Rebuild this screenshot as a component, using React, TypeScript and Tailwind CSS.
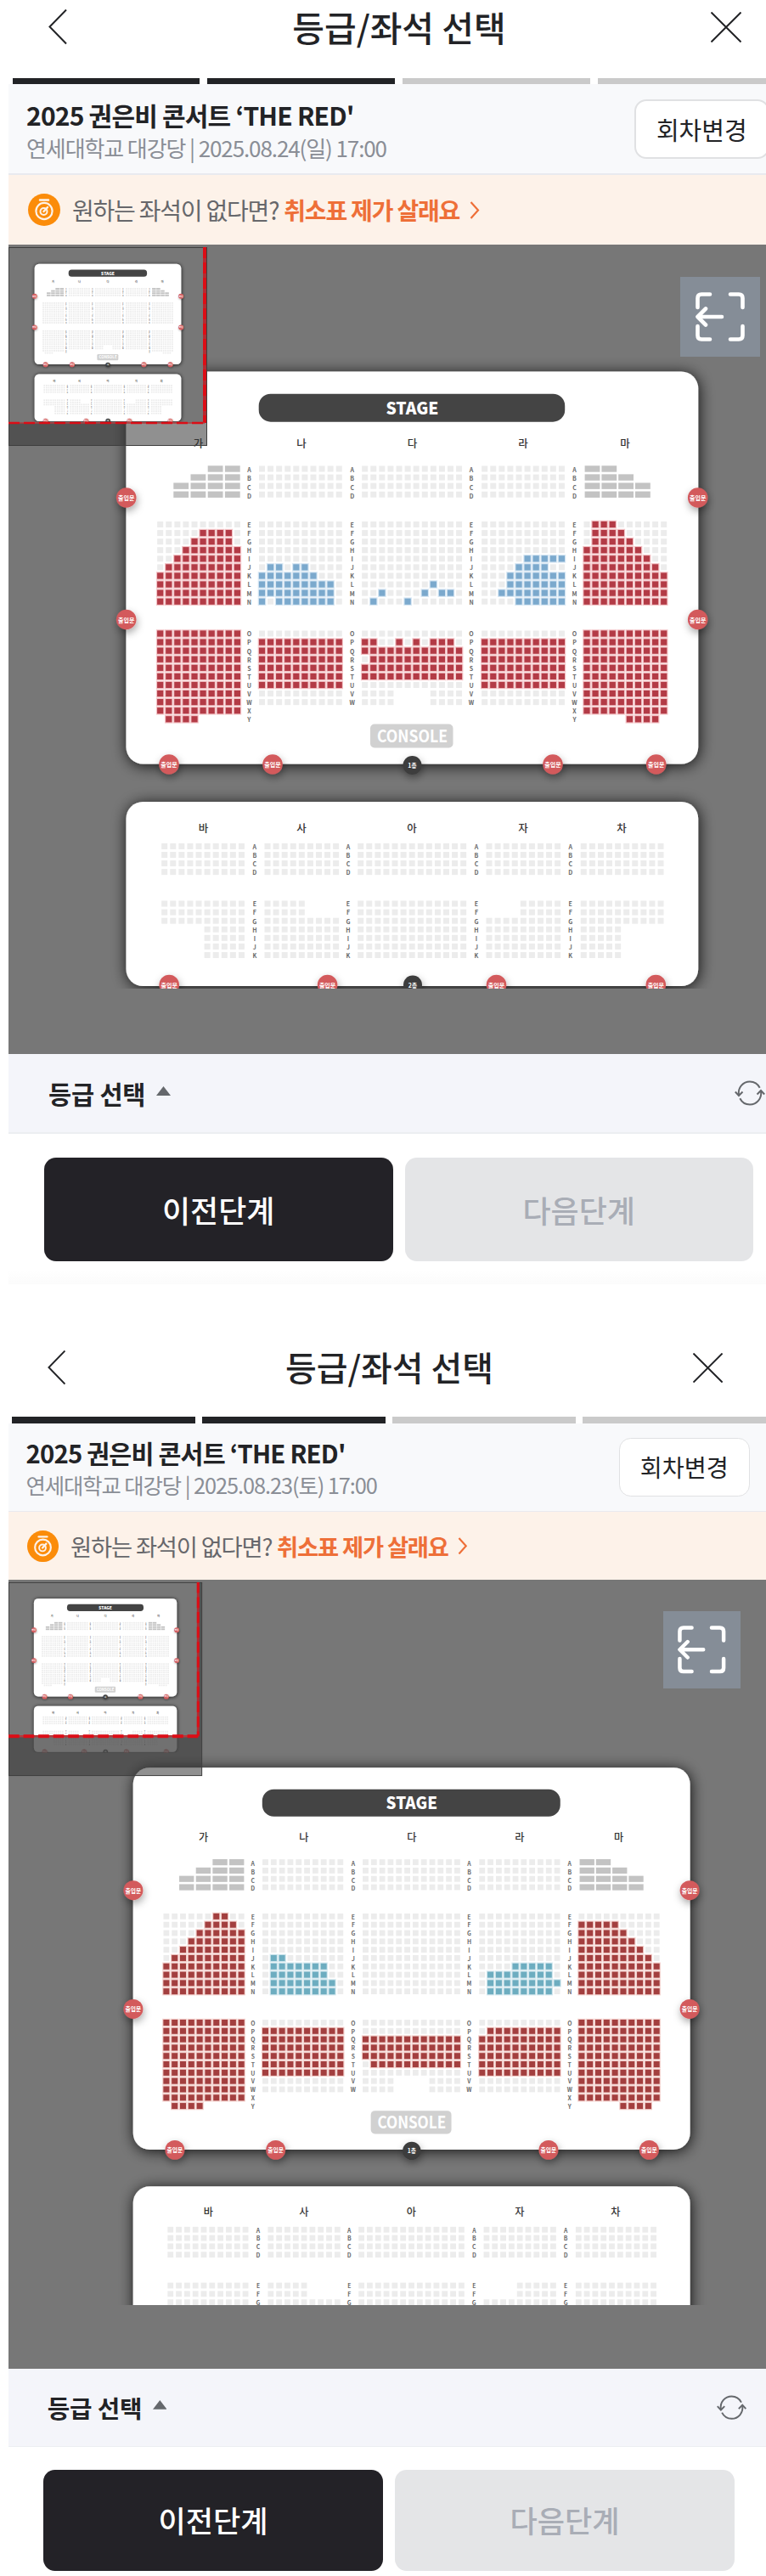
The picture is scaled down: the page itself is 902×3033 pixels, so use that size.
import React from "react";

const FONT = "'Noto Sans CJK KR', 'Noto Sans', sans-serif";

type Block = { x: number; y: number; rows: string[] };
type Palette = { red: string; redHalo: string; blue: string; blueHalo: string };

// "." free seat slot, "r" / "b" coloured seat, " " no seat
const E10 = "..........";
const E12 = "............";
const R10 = "rrrrrrrrrr";
const R12 = "rrrrrrrrrrrr";
const rep = (row: string, n: number): string[] => Array.from({ length: n }, () => row);

const X1 = [188.7, 308.5, 429.7, 570.7, 691];
const YA = 552;
const YB = 617.5;
const YC = 746;

const upperEmpty: Block[] = [
  { x: X1[1], y: YA, rows: rep(E10, 4) },
  { x: X1[2], y: YA, rows: rep(E12, 4) },
  { x: X1[3], y: YA, rows: rep(E10, 4) },
];

const secondFloor: Block[] = [
  { x: 193.7, y: 996.4, rows: rep(E10, 4) },
  { x: 315, y: 996.4, rows: rep(".........", 4) },
  { x: 424.7, y: 996.4, rows: rep(".............", 4) },
  { x: 576, y: 996.4, rows: rep(".........", 4) },
  { x: 687.3, y: 996.4, rows: rep(E10, 4) },
  { x: 193.7, y: 1064, rows: [...rep(E10, 3), ...rep("     .....", 4)] },
  { x: 315, y: 1064, rows: [...rep(".....", 2), ...rep(".........", 5)] },
  { x: 424.7, y: 1064, rows: rep(".............", 7) },
  { x: 576, y: 1064, rows: [...rep("    .....", 2), ...rep(".........", 5)] },
  { x: 687.3, y: 1064, rows: [...rep(E10, 3), ...rep(".....", 4)] },
];

const sunday: Block[] = [
  {
    x: X1[0],
    y: YB,
    rows: [E10, ".....rrrr.", "....rrrrr.", "...rrrrrrr", "..rrrrrrrr", ".rrrrrrrrr", ...rep(R10, 4)],
  },
  {
    x: X1[1],
    y: YB,
    rows: [...rep(E10, 5), ".bb.bb....", "bbbbbbb...", "bbbbbbbbb.", "bbbbbbbbb.", "b.bbbbbbb."],
  },
  { x: X1[2], y: YB, rows: [...rep(E12, 7), "........b...", "..b....b.bb.", ".b...b......"] },
  {
    x: X1[3],
    y: YB,
    rows: [...rep(E10, 4), ".....bbbbb", "....bbbb..", "...bbbbbbb", "...bbbbbbb", "..bbbbbbbb", "....bbbbbb"],
  },
  {
    x: X1[4],
    y: YB,
    rows: [".rrr......", ".rrrr.....", ".rrrrr....", "rrrrrrr...", "rrrrrrrr..", "rrrrrrrrr.", ...rep(R10, 4)],
  },
  { x: X1[0], y: YC, rows: [...rep(R10, 10), " rrrr"] },
  { x: X1[1], y: YC, rows: [E10, ...rep(R10, 6), E10, E10] },
  {
    x: X1[2],
    y: YC,
    rows: [E12, "rr..r.r.rrr.", R12, ".rrrrrrrrrrr", R12, R12, E12, "....    ....", "....    ...."],
  },
  { x: X1[3], y: YC, rows: [E10, ...rep(R10, 6), E10, E10] },
  { x: X1[4], y: YC, rows: [...rep(R10, 10), "     rrrr"] },
];

const saturday: Block[] = [
  {
    x: X1[0],
    y: YB,
    rows: ["......rr..", ".....rrrr.", "....rrrrrr", "...rrrrrrr", "..rrrrrrrr", ".rrrrrrrrr", ...rep(R10, 4)],
  },
  {
    x: X1[1],
    y: YB,
    rows: [...rep(E10, 5), ".bb.......", ".bbbbbbb..", ".bbbbbbb..", ".bbbbbbbb.", ".bbbbbbbb."],
  },
  { x: X1[2], y: YB, rows: rep(E12, 10) },
  {
    x: X1[3],
    y: YB,
    rows: [...rep(E10, 6), "....bbbbb.", ".bbbbbbbb.", ".bbbbbbbbb", ".bbbbbbbb."],
  },
  {
    x: X1[4],
    y: YB,
    rows: [E10, "rrrrr.....", "rrrrrr....", "rrrrrrr...", "rrrrrrrr..", "rrrrrrrrr.", ...rep(R10, 4)],
  },
  { x: X1[0], y: YC, rows: [...rep(R10, 10), " rrrr"] },
  { x: X1[1], y: YC, rows: [E10, ...rep(R10, 6), E10, E10] },
  {
    x: X1[2],
    y: YC,
    rows: [E12, E12, R12, R12, R12, ".rrrrrrrrrrr", E12, "....    ....", "....    ...."],
  },
  { x: X1[3], y: YC, rows: [E10, ".rrrrrrrrr", ...rep(R10, 5), E10, E10] },
  { x: X1[4], y: YC, rows: [...rep(R10, 10), "     rrrr"] },
];

function Seats({ blocks, palette }: { blocks: Block[]; palette: Palette }) {
  const p = 10.08;
  const halos: React.ReactNode[] = [];
  const seats: React.ReactNode[] = [];
  blocks.forEach((b, bi) =>
    b.rows.forEach((row, r) =>
      row.split("").forEach((c, i) => {
        if (c === " ") return;
        const x = b.x + i * p;
        const y = b.y + r * p;
        const k = `${bi}-${r}-${i}`;
        if (c === ".") {
          seats.push(<rect key={k} x={x - 3.5} y={y - 3.5} width={7} height={7} fill="#ececec" />);
          return;
        }
        halos.push(
          <rect key={k} x={x - 4.8} y={y - 4.8} width={9.6} height={9.6} fill={c === "r" ? palette.redHalo : palette.blueHalo} />
        );
        seats.push(
          <rect key={k} x={x - 3.6} y={y - 3.6} width={7.2} height={7.2} fill={c === "r" ? palette.red : palette.blue} />
        );
      })
    )
  );
  return (
    <g>
      {halos}
      {seats}
    </g>
  );
}

function RowLetters({ x, y, text }: { x: number; y: number; text: string }) {
  return (
    <g fontSize={7} fontWeight={700} fill="#6a6a6a" textAnchor="middle">
      {text.split("").map((c, i) => (
        <text key={c} x={x} y={y + i * 10.08 + 3.4}>
          {c}
        </text>
      ))}
    </g>
  );
}

function Gate({ x, y, label, dark }: { x: number; y: number; label: string; dark?: boolean }) {
  return (
    <g>
      <circle cx={x} cy={y} r={dark ? 11 : 11.8} fill={dark ? "#3c3c3c" : "#d35a5c"} filter="url(#gateShadow)" />
      <text x={x} y={y + 3} fontSize={7} fontWeight={700} fill="#fff" textAnchor="middle">
        {label}
      </text>
    </g>
  );
}

const greyBlocks: [number, number][] = [
  [2, 0], [3, 0], [1, 1], [2, 1], [3, 1], [0, 2], [1, 2], [2, 2], [3, 2], [0, 3], [1, 3], [2, 3], [3, 3],
];

function Plan({ blocks, palette, plain }: { blocks: Block[]; palette: Palette; plain?: boolean }) {
  const first: Block[] = plain
    ? blocks.map((b) => ({ ...b, rows: b.rows.map((r) => r.replace(/[rb]/g, ".")) }))
    : blocks;
  return (
    <g clipPath="url(#planClip)">
      <rect x={148.5} y={437.5} width={673.7} height={462} rx={20} fill="#fff" filter="url(#cardShadow)" />
      <rect x={148.5} y={944} width={673.7} height={217} rx={20} fill="#fff" filter="url(#cardShadow)" />
      <rect x={304.7} y={463.7} width={360.5} height={33} rx={14} fill="#444" />
      <text x={485.5} y={487.5} fontSize={20} fontWeight={900} fill="#fff" textAnchor="middle" textLength={62} lengthAdjust="spacingAndGlyphs">
        STAGE
      </text>
      <g fontSize={12.5} fontWeight={500} fill="#333" textAnchor="middle">
        {["가", "나", "다", "라", "마"].map((t, i) => (
          <text key={t} x={[233.5, 355, 485.5, 616, 736][i]} y={526.5}>
            {t}
          </text>
        ))}
        {["바", "사", "아", "자", "차"].map((t, i) => (
          <text key={t} x={[239.5, 355, 485, 616, 732][i]} y={979.5}>
            {t}
          </text>
        ))}
      </g>
      {greyBlocks.map(([c, r]) => (
        <g key={`${c}-${r}`} fill="#c3c3c3">
          <rect x={204.3 + c * 20.2} y={YA - 3.7 + r * 10.08} width={17.8} height={7.4} />
          <rect x={748 - c * 19.8} y={YA - 3.7 + r * 10.08} width={17.8} height={7.4} />
        </g>
      ))}
      <Seats blocks={upperEmpty} palette={palette} />
      <Seats blocks={first} palette={palette} />
      <Seats blocks={secondFloor} palette={palette} />
      {[293.4, 414.7, 555, 676.5].map((x, i) => (
        <g key={x}>
          <RowLetters x={x} y={YA + 1} text="ABCD" />
          <RowLetters x={x} y={YB} text="EFGHIJKLMN" />
          <RowLetters x={x} y={YC} text={i === 0 || i === 3 ? "OPQRSTUVWXY" : "OPQRSTUVW"} />
        </g>
      ))}
      {[299.8, 410, 561, 671.7].map((x) => (
        <g key={x}>
          <RowLetters x={x} y={996.4} text="ABCD" />
          <RowLetters x={x} y={1064} text="EFGHIJK" />
        </g>
      ))}
      <rect x={436} y={852.5} width={97.5} height={28} rx={5} fill="#d1d1d1" />
      <text x={485.5} y={873.8} fontSize={20} fontWeight={700} fill="#fff" textAnchor="middle" textLength={83} lengthAdjust="spacingAndGlyphs">
        CONSOLE
      </text>
      {[148.7, 821.7].map((x) => (
        <g key={x}>
          <Gate x={x} y={586} label="출입문" />
          <Gate x={x} y={729.5} label="출입문" />
        </g>
      ))}
      {[199, 321, 651, 772.7].map((x) => (
        <Gate key={x} x={x} y={900} label="출입문" />
      ))}
      <Gate x={485.5} y={901} label="1층" dark />
      {[199.2, 385.6, 584.5, 772.3].map((x) => (
        <Gate key={x} x={x} y={1159.5} label="출입문" />
      ))}
      <Gate x={486} y={1159.5} label="2층" dark />
    </g>
  );
}

type MapProps = {
  id: string;
  label: string;
  blocks: Block[];
  palette: Palette;
  transform?: string;
  viewX: number;
  viewXWidth: number;
  viewY: number;
  viewYHeight: number;
};

function SeatMap({ id, label, blocks, palette, transform, viewX, viewXWidth, viewY, viewYHeight }: MapProps) {
  const mini = "translate(40.7 310.7) scale(0.2562) translate(-148.5 -437.5)";
  return (
    <svg
      className="block h-[953px] w-[919px]"
      viewBox="10 288 919 953"
      role="img"
      aria-label={label}
      fontFamily={FONT}
    >
      <defs>
        <filter id="cardShadow" x="-10%" y="-20%" width="120%" height="140%">
          <feDropShadow dx="1" dy="2" stdDeviation="9" floodColor="#000" floodOpacity="0.85" />
        </filter>
        <filter id="gateShadow" x="-80%" y="-80%" width="260%" height="260%">
          <feDropShadow dx="1" dy="4" stdDeviation="5" floodColor="#000" floodOpacity="0.35" />
        </filter>
        <clipPath id="planClip">
          <rect x={100} y={380} width={800} height={784} />
        </clipPath>
        <clipPath id={`${id}-main`}>
          <rect x={10} y={288} width={919} height={876} />
        </clipPath>
        <clipPath id={`${id}-view`}>
          <rect x={10} y={291} width={viewX - 10} height={viewY - 291} />
        </clipPath>
        <clipPath id={`${id}-rest`}>
          <path d={`M${viewX} 291H244V525H10V${viewY}H${viewX}Z`} />
        </clipPath>
      </defs>
      <rect x={10} y={288} width={919} height={953} fill="#777" />
      <g clipPath={`url(#${id}-main)`}>
        <g transform={transform}>
          <Plan blocks={blocks} palette={palette} />
        </g>
      </g>
      <g clipPath={`url(#${id}-rest)`}>
        <g transform={mini} opacity={0.5}>
          <Plan blocks={blocks} palette={palette} plain />
        </g>
        <rect x={10} y={291} width={234} height={234} fill="#343434" fillOpacity={0.55} />
      </g>
      <g clipPath={`url(#${id}-view)`}>
        <rect x={10} y={291} width={234} height={234} fill="#777" />
        <g transform={mini}>
          <Plan blocks={blocks} palette={palette} plain />
        </g>
      </g>
      <rect x={10.5} y={291.5} width={233} height={233} fill="none" stroke="#3f3f3f" />
      <line x1={viewX} y1={291} x2={viewX} y2={viewY} stroke="#b52a30" strokeWidth={viewXWidth} />
      <line x1={viewX} y1={291} x2={viewX} y2={viewY} stroke="#dc0d16" strokeWidth={viewXWidth} strokeDasharray="13 5" />
      <line x1={10} y1={viewY} x2={viewX} y2={viewY} stroke="#b33a3d" strokeWidth={viewYHeight * 0.6} />
      <line x1={10} y1={viewY} x2={viewX + 1} y2={viewY} stroke="#dc0d16" strokeWidth={viewYHeight} strokeDasharray="13 5" />
    </svg>
  );
}

function Screen({ date, map }: { date: string; map: React.ReactNode }) {
  return (
    <section className="flex w-[919px] flex-col bg-white">
      <header className="mb-[27.5px] flex h-16 items-center justify-between pr-[56px] pl-[47px]">
        <svg className="h-[42px] w-[22px]" viewBox="0 0 22 42" fill="none" stroke="#222326" strokeWidth="2">
          <path d="M21 0.5L1.5 20.5L21 40.5" />
        </svg>
        <h1 className="pb-[2px] pl-[24px] text-[41px] leading-[62px] font-medium text-[#222326]">등급/좌석 선택</h1>
        <svg className="h-[36px] w-[36px]" viewBox="0 0 36 36" fill="none" stroke="#222326" strokeWidth="2">
          <path d="M0.5 0.5L35.5 35.5M35.5 0.5L0.5 35.5" />
        </svg>
      </header>
      <div className="flex h-[7.5px] gap-[9px] px-[4.5px]">
        <div className="flex-1 bg-[#222326]" />
        <div className="flex-1 bg-[#222326]" />
        <div className="flex-1 bg-[#cacaca]" />
        <div className="flex-1 bg-[#cacaca]" />
      </div>
      <div className="flex h-[107px] items-center justify-between border-b-2 border-[#e9eaef] bg-[#f8f9fb] pr-[23.5px] pl-[21px]">
        <div className="flex flex-col pt-[4px]">
          <h2 className="text-[30px] leading-[40px] font-bold tracking-[-0.8px] whitespace-nowrap text-[#222326]">
            2025 권은비 콘서트 ‘THE RED'
          </h2>
          <p className="text-[26px] leading-[38px] tracking-[-1.1px] whitespace-nowrap text-[#8a8e96]">
            연세대학교 대강당 | {date} 17:00
          </p>
        </div>
        <button className="h-[70px] w-[158.5px] rounded-[14px] border-2 border-[#e0e1e3] bg-white text-[29px] leading-[66px] text-[#222326]">
          회차변경
        </button>
      </div>
      <div className="flex h-[82px] items-center bg-[#fdf2e9] pl-[23px]">
        <svg className="h-[38px] w-[38px]" viewBox="0 0 38 38" fill="none">
          <circle cx="19" cy="19" r="19" fill="#fb8c0a" />
          <path d="M14 7.5H24" stroke="#fdf2e9" strokeWidth="2.4" strokeLinecap="round" />
          <circle cx="19" cy="20.5" r="9.6" stroke="#fdf2e9" strokeWidth="2.2" />
          <circle cx="18.5" cy="21" r="4" stroke="#fdf2e9" strokeWidth="2" />
          <path d="M18.5 21L23 16" stroke="#fdf2e9" strokeWidth="2.4" strokeLinecap="round" />
        </svg>
        <p className="flex gap-[6px] pl-[14px] text-[28px] leading-[40px] tracking-[-1.2px] whitespace-nowrap">
          <span className="text-[#66676b]">원하는 좌석이 없다면?</span>
          <span className="font-bold text-[#ee6f38]">취소표 제가 살래요</span>
        </p>
        <svg className="ml-[12px] h-[21px] w-[12px]" viewBox="0 0 12 21" fill="none" stroke="#ee6f38" strokeWidth="2.2">
          <path d="M1.5 1L10 10.5L1.5 20" />
        </svg>
      </div>
      <div className="relative">
        {map}
        <button className="absolute top-[37.5px] left-[790.5px] flex h-[94px] w-[94px] items-center justify-center bg-[#858d97]" aria-label="전체 보기">
          <svg className="h-[58px] w-[58px]" viewBox="0 0 58 58" fill="none" stroke="#fff" strokeWidth="4.6" strokeLinecap="round" strokeLinejoin="round">
            <path d="M2.5 18V7Q2.5 2.5 7 2.5H17M41 2.5H51Q55.5 2.5 55.5 7V18M55.5 40V51Q55.5 55.5 51 55.5H41M17 55.5H7Q2.5 55.5 2.5 51V40M31 29H3M12 19.5L2.5 29L12 38.5" />
          </svg>
        </button>
      </div>
      <div className="flex h-[94px] items-center border-b-2 border-[#eceef1] bg-[#f4f5fa] pr-[28px] pl-[47px]">
        <span className="text-[29.5px] leading-[40px] font-bold tracking-[-0.2px] text-[#222326]">등급 선택</span>
        <svg className="mb-[6px] ml-[13px] h-[11px] w-[17px]" viewBox="0 0 17 11">
          <path d="M8.5 0L17 11H0Z" fill="#65686c" />
        </svg>
        <svg className="ml-auto h-[30px] w-[36px]" viewBox="0 0 36 30" fill="none" stroke="#65686c" strokeWidth="2">
          <path d="M5 17.5C3.5 8.5 10 1.5 18 1.5C23.5 1.5 27.5 4.5 29.7 8.8M31 12.5C32.5 21.5 26 28.5 18 28.5C12.5 28.5 8.5 25.5 6.3 21.2" />
          <path d="M0.8 13.5L5 18L9.5 13.5M26.5 16.5L31 12L35.2 16.5" />
        </svg>
      </div>
      <div className="flex gap-[14px] px-[42px] pt-[28px] text-[36px] font-medium">
        <button className="h-[121.5px] flex-1 rounded-[14px] bg-[#232227] text-white">이전단계</button>
        <button className="h-[121.5px] flex-1 rounded-[14px] bg-[#e4e5e7] text-[#a9adb6]">다음단계</button>
      </div>
      <div className="mt-[10px] h-[17px] bg-linear-to-b from-white to-[#fbfbfb]" />
    </section>
  );
}

export default function App() {
  return (
    <main className="h-[3033px] w-full overflow-hidden bg-white pl-[10px] font-['Noto_Sans_CJK_KR','Noto_Sans',sans-serif]">
      <Screen
        date="2025.08.24(일)"
        map={
          <SeatMap
            id="sun"
            label="8월 24일 좌석 배치도"
            blocks={sunday}
            palette={{ red: "#b33b46", redHalo: "#f3c3c6", blue: "#7ba9cd", blueHalo: "#d6e6f3" }}
            viewX={241}
            viewXWidth={4}
            viewY={498}
            viewYHeight={2.4}
          />
        }
      />
      <div className="mt-[69.5px] [zoom:0.975]">
        <Screen
          date="2025.08.23(토)"
          map={
            <SeatMap
              id="sat"
              label="8월 23일 좌석 배치도"
              blocks={saturday}
              palette={{ red: "#a33f3f", redHalo: "#f2cdc9", blue: "#6dadc0", blueHalo: "#d0e6ed" }}
              transform="translate(160.5 514.8) scale(0.9985) translate(-148.5 -437.5)"
              viewX={239}
              viewXWidth={3}
              viewY={477}
              viewYHeight={4}
            />
          }
        />
      </div>
    </main>
  );
}
